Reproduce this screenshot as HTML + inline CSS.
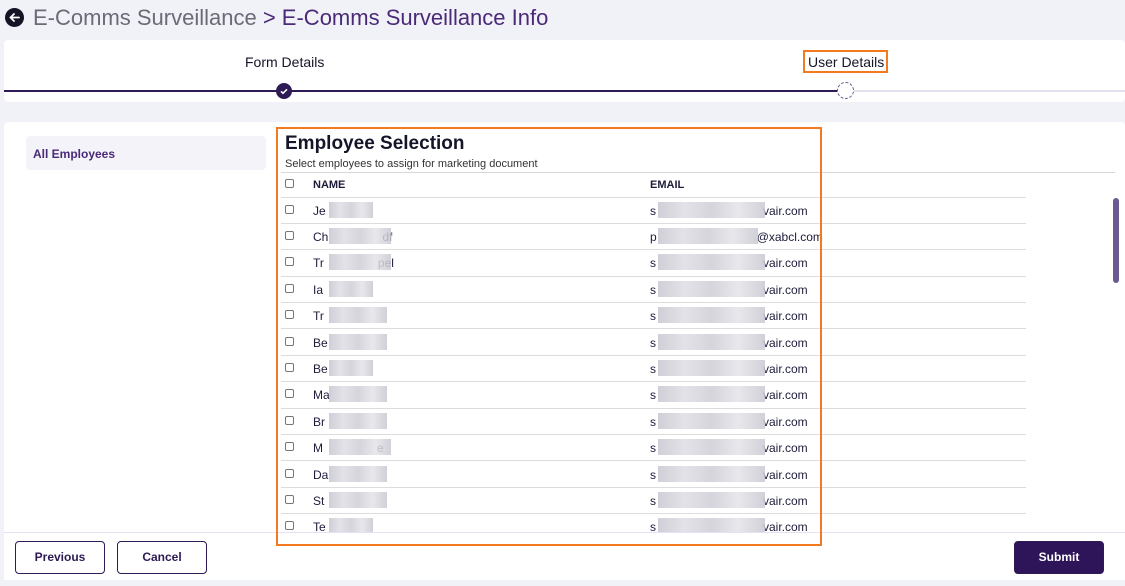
<!DOCTYPE html>
<html><head><style>
*{box-sizing:border-box;margin:0;padding:0}
body{width:1125px;height:586px;background:#f1f2f7;font-family:"Liberation Sans",sans-serif;position:relative;overflow:hidden;color:#1a1a2e}
.abs{position:absolute}
.hdr{left:33px;top:5px;font-size:22px;color:#6b6b78;white-space:nowrap}
.hdr span{color:#4a2a78}
.back{left:5px;top:8px;width:19px;height:19px;border-radius:50%;background:#141426}
.card1{left:4px;top:40px;width:1121px;height:62px;background:#fff;border-radius:4px}
.card2{left:4px;top:122px;width:1121px;height:458px;background:#fff;border-radius:4px;overflow:hidden}
.side{left:26px;top:136px;width:240px;height:34px;background:#f3f3f9;border-radius:4px;font-size:12px;font-weight:bold;color:#4a2a78;padding:11px 7px}
.row{position:absolute;left:281px;width:745px;height:26.4px;border-bottom:1px solid #dcdcdc;font-size:12px;color:#1c1c3a}
.cb{position:absolute;left:4px;top:7px;width:9px;height:9px;border:1px solid #777;border-radius:2px;background:#fff}
.nm{position:absolute;left:32px;top:6px}
.em{position:absolute;left:369px;top:6px}
.blur{position:absolute;height:16px;background:linear-gradient(90deg,#c8c6d0,#dedde4,#cfcdd6,#e4e3e8,#c9c8d2);opacity:.85}
.btn{position:absolute;top:541px;height:33px;border:1px solid #2e1a55;border-radius:4px;font-size:12px;font-weight:bold;color:#2e1a55;text-align:center;line-height:31px;background:#fff}
</style></head><body>
<div class="abs back"><svg width="19" height="19" viewBox="0 0 19 19"><path d="M14 9.5H5.5M9 6L5.5 9.5 9 13" stroke="#fff" stroke-width="1.8" fill="none" stroke-linecap="round"/></svg></div>
<div class="abs hdr">E-Comms Surveillance <span>&gt; E-Comms Surveillance Info</span></div>
<div class="abs card1"></div>
<div class="abs" style="left:245px;top:54px;font-size:14px;color:#15152a">Form Details</div>
<div class="abs" style="left:803px;top:50px;width:85px;height:23px;border:2px solid #f47a20;font-size:14px;color:#15152a;padding:2px 0 0 3px">User Details</div>
<div class="abs" style="left:4px;top:90px;width:840px;height:2px;background:#2e1a55"></div>
<div class="abs" style="left:844px;top:90px;width:281px;height:2px;background:#e4e0f0"></div>
<div class="abs" style="left:276px;top:83px;width:16px;height:16px;border-radius:50%;background:#2e1a55"><svg width="16" height="16"><path d="M5 8.3l2 2 4-4" stroke="#fff" stroke-width="1.6" fill="none"/></svg></div>
<div class="abs" style="left:837px;top:82px;width:17px;height:17px;border-radius:50%;background:#fff;border:1px dashed #6b5a8e"></div>
<div class="abs card2"></div>
<div class="abs side">All Employees</div>
<div class="abs" style="left:285px;top:133px;font-size:19px;font-weight:bold;color:#15152a">Employee Selection</div>
<div class="abs" style="left:285px;top:158px;font-size:11px;color:#333">Select employees to assign for marketing document</div>
<div class="abs" style="left:281px;top:172px;width:834px;height:1px;background:#d8d8d8"></div>
<div class="row" style="top:172px;height:25.5px;font-weight:bold;font-size:11px"><div class="cb"></div><div class="nm" style="top:7px">NAME</div><div class="em" style="top:7px">EMAIL</div></div>
<div id="rows"></div>
<div class="abs" style="left:1113px;top:198px;width:6px;height:85px;border-radius:3px;background:#6b5a8e"></div>
<div class="abs" style="left:4px;top:532px;width:1121px;height:48px;background:#fff;border-top:1px solid #e4e2f2"></div>
<div class="abs" style="left:276px;top:127px;width:546px;height:419px;border:2px solid #f47a20"></div>
<div class="btn" style="left:15px;width:90px">Previous</div>
<div class="btn" style="left:117px;width:90px">Cancel</div>
<div class="btn" style="left:1014px;width:90px;background:#2e1458;color:#fff">Submit</div>
<script>
var n=[["Je",""],["Ch","df"],["Tr","pel"],["Ia",""],["Tr",""],["Be",""],["Be",""],["Ma",""],["Br",""],["M","e"],["Da",""],["St",""],["Te",""]];
var e=["vair.com","@xabcl.com","vair.com","vair.com","vair.com","vair.com","vair.com","vair.com","vair.com","vair.com","vair.com","vair.com","vair.com"];
var h="";
for(var i=0;i<n.length;i++){var t=197.5+i*26.4;if(t>520)break;
var bw=(i==1||i==2||i==9?62:(i%3?58:44));
h+='<div class="row" style="top:'+t+'px"><div class="cb"></div><div class="nm">'+n[i][0]+'<span style="display:inline-block;width:'+(n[i][1]?bw-8:0)+'px"></span>'+n[i][1]+'</div><div class="blur" style="left:48px;top:4px;width:'+bw+'px"></div><div class="em">'+(i==1?'p':'s')+'<span style="display:inline-block;width:'+(i==1?100:107)+'px"></span>'+e[i]+'</div><div class="blur" style="left:377px;top:4px;width:'+(i==1?100:107)+'px"></div></div>';}
document.getElementById("rows").innerHTML=h;
</script>
</body></html>
